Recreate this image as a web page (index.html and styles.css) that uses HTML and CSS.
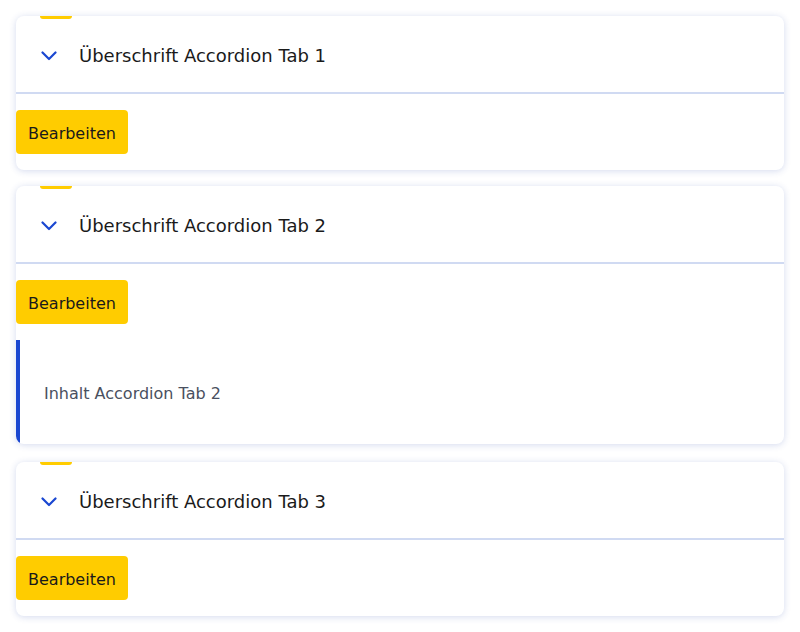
FILE: index.html
```html
<!DOCTYPE html>
<html lang="de">
<head>
<meta charset="utf-8">
<title>Accordion</title>
<link rel="stylesheet" href="styles.css">
</head>
<body>
<div class="accordion">
  <section class="card">
    <span class="tab-marker"></span>
    <div class="header">
      <svg class="chevron" width="16" height="10" viewBox="0 0 16 10"><path d="M1.5 1.5 L8 8 L14.5 1.5" fill="none" stroke="#1a47d1" stroke-width="2.2" stroke-linecap="round" stroke-linejoin="round"/></svg>
      <span class="title">Überschrift Accordion Tab 1</span>
    </div>
    <div class="actions"><button class="btn">Bearbeiten</button></div>
  </section>
  <section class="card">
    <span class="tab-marker"></span>
    <div class="header">
      <svg class="chevron" width="16" height="10" viewBox="0 0 16 10"><path d="M1.5 1.5 L8 8 L14.5 1.5" fill="none" stroke="#1a47d1" stroke-width="2.2" stroke-linecap="round" stroke-linejoin="round"/></svg>
      <span class="title">Überschrift Accordion Tab 2</span>
    </div>
    <div class="actions"><button class="btn">Bearbeiten</button></div>
    <div class="content">Inhalt Accordion Tab 2</div>
  </section>
  <section class="card">
    <span class="tab-marker"></span>
    <div class="header">
      <svg class="chevron" width="16" height="10" viewBox="0 0 16 10"><path d="M1.5 1.5 L8 8 L14.5 1.5" fill="none" stroke="#1a47d1" stroke-width="2.2" stroke-linecap="round" stroke-linejoin="round"/></svg>
      <span class="title">Überschrift Accordion Tab 3</span>
    </div>
    <div class="actions"><button class="btn">Bearbeiten</button></div>
  </section>
</div>
</body>
</html>
```
FILE: styles.css
```css
html, body {
  margin: 0;
  padding: 0;
  background: #ffffff;
}
body {
  font-family: "DejaVu Sans", Verdana, sans-serif;
  color: #1a1a1a;
}
.accordion {
  padding: 16px;
  display: flex;
  flex-direction: column;
  gap: 16px;
}
.card {
  position: relative;
  background: #fff;
  border-radius: 8px;
  overflow: hidden;
  box-shadow: 0 1px 7px rgba(40, 70, 170, 0.2);
}
.card:last-child {
  margin-top: 2px;
}
.tab-marker {
  position: absolute;
  top: 0;
  left: 24px;
  width: 32px;
  height: 3px;
  background: #ffcc00;
  border-radius: 0 0 3px 3px;
}
.header {
  height: 74px;
  padding-top: 2px;
  display: flex;
  align-items: center;
  padding-left: 25px;
  border-bottom: 2px solid #d0daf2;
}
.chevron {
  display: block;
  width: 16px;
  height: 10px;
  margin-top: 2px;
}
.title {
  margin-left: 22px;
  font-size: 18px;
  color: #1a1a1a;
}
.actions {
  padding: 16px 0;
}
.btn {
  display: block;
  height: 44px;
  padding: 2px 12px 0;
  border: none;
  border-radius: 4px;
  background: #ffcc00;
  font-family: "DejaVu Sans", Verdana, sans-serif;
  font-size: 16px;
  color: #1a1a1a;
}
.content {
  border-left: 4px solid #1a47d1;
  padding: 42px 24px 38px;
  line-height: 24px;
  font-size: 16px;
  color: #4a5060;
}
```
